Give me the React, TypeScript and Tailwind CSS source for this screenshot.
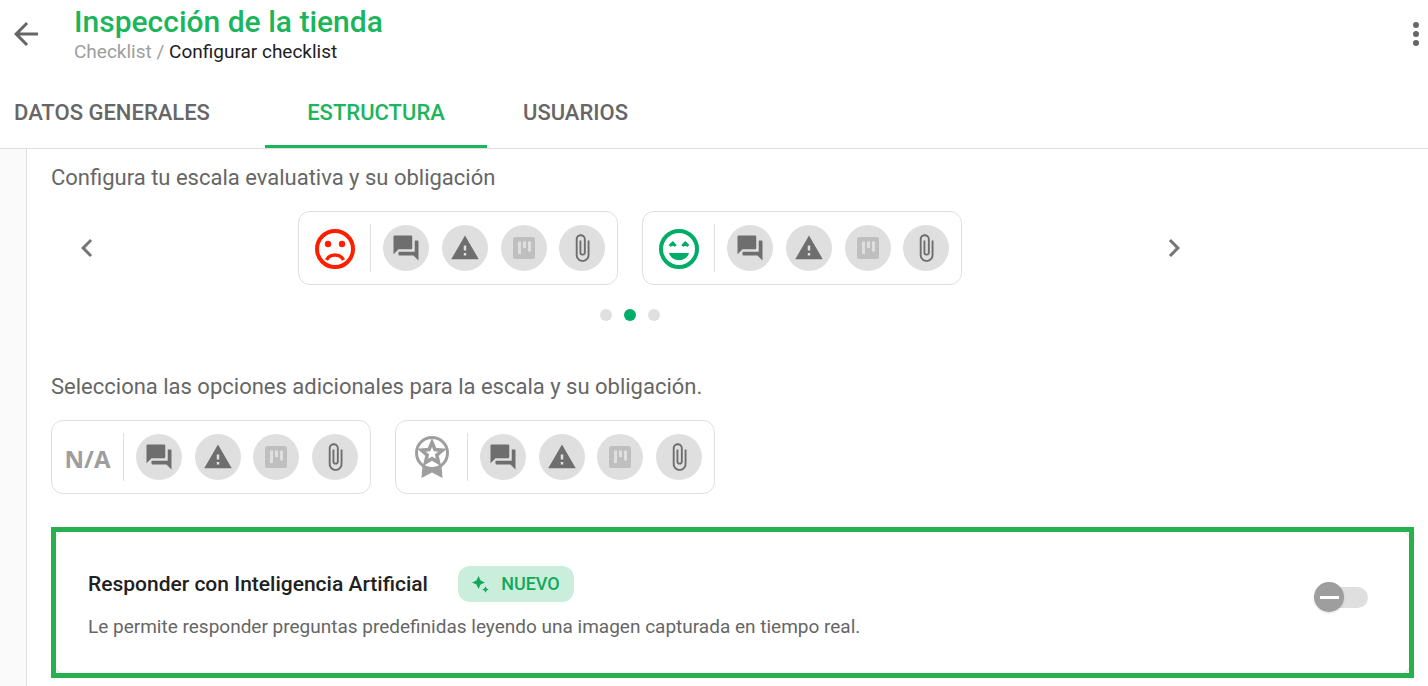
import type { ReactNode } from "react";
import {
  MdArrowBack,
  MdAttachFile,
  MdChevronLeft,
  MdChevronRight,
  MdForum,
  MdWarning,
} from "react-icons/md";

const tabs = [
  { label: "DATOS GENERALES", active: false, width: "w-[265px] pl-[14px] text-left" },
  { label: "ESTRUCTURA", active: true, width: "w-[222px] text-center" },
  { label: "USUARIOS", active: false, width: "w-[188px] pl-9 text-left" },
];

function BoardIcon() {
  return (
    <svg viewBox="0 0 24 24" className="size-6" fill="none" aria-hidden="true">
      <rect x="1" y="1" width="22" height="22" rx="2.5" fill="#bfbfbf" />
      <path d="M6 5.5h3v12.5H6zM11 5.5h3v6.500h-3zM16 5.500h3v10h-3z" fill="#dfdfdf" />
    </svg>
  );
}

function SadFace() {
  return (
    <svg viewBox="0 0 40 40" className="mt-0.5 size-10" fill="none" aria-hidden="true">
      <circle cx="20" cy="20" r="18" stroke="#ff1f00" strokeWidth="4" />
      <circle cx="13" cy="15" r="3.2" fill="#ff1f00" />
      <circle cx="27" cy="15" r="3.2" fill="#ff1f00" />
      <path d="M11.500 31c1.500-3.200 4.700-5 8.500-5s7 1.800 8.500 5" stroke="#ff1f00" strokeWidth="3.4" />
    </svg>
  );
}

function HappyFace() {
  return (
    <svg viewBox="0 0 40 40" className="mt-0.5 size-10" fill="none" aria-hidden="true">
      <circle cx="20" cy="20" r="18" stroke="#00ad68" strokeWidth="4" />
      <path d="M10.700 17l3-3 3 3M23.300 17l3-3 3 3" stroke="#00ad68" strokeWidth="3" />
      <path d="M10 24h20c-1.300 4.500-5.200 7.200-10 7.200S11.300 28.500 10 24z" fill="#00ad68" />
    </svg>
  );
}

function MedalIcon() {
  return (
    <svg viewBox="0 0 34 42" className="h-[42px] w-[34px]" fill="none" aria-hidden="true">
      <circle cx="17" cy="17" r="15.500" stroke="#9e9e9e" strokeWidth="3" />
      <path
        d="M17 6.500l3 7 7.500.700-5.700 5 1.700 7.300-6.500-3.900-6.500 3.900 1.700-7.300-5.700-5 7.500-.7z"
        stroke="#9e9e9e"
        strokeWidth="3.600"
      />
      <path d="M7.500 29.500c5.500 3.500 13.500 3.500 19 0l1 12.500L17 36.500 6.500 42z" fill="#9e9e9e" />
    </svg>
  );
}

function SparkleIcon() {
  return (
    <svg viewBox="0 0 17 17" className="size-[17px]" fill="#12a95b" aria-hidden="true">
      <path d="M6.500 0l2.100 4.400L13 6.500 8.600 8.600 6.500 13 4.400 8.600 0 6.500l4.400-2.100z" />
      <path d="M13.500 10.200l1.100 2.200 2.200 1.100-2.200 1.100-1.100 2.200-1.100-2.200-2.200-1.100 2.200-1.100z" />
    </svg>
  );
}

const actions = [
  { label: "Comentario", icon: <MdForum className="size-[30px]" /> },
  { label: "Alerta", icon: <MdWarning className="size-[30px]" /> },
  { label: "Plan de acción", icon: <BoardIcon /> },
  { label: "Adjunto", icon: <MdAttachFile className="size-[30px]" /> },
];

function ScaleCard({ children }: { children: ReactNode }) {
  return (
    <div className="flex h-[74px] w-80 items-center rounded-xl border border-[#dfdfdf] pr-3">
      <div className="flex w-[71px] shrink-0 justify-center">{children}</div>
      <div className="h-12 w-px bg-[#dfdfdf]" />
      <div className="ml-3 flex flex-1 justify-between">
        {actions.map((action) => (
          <button
            key={action.label}
            type="button"
            aria-label={action.label}
            className="flex size-[46px] items-center justify-center rounded-full bg-[#dfdfdf] text-[#6e6e6e]"
          >
            {action.icon}
          </button>
        ))}
      </div>
    </div>
  );
}

function Header() {
  return (
    <header className="border-b border-[#dfdfdf]">
      <div className="flex h-[76px] items-start justify-between">
        <div className="flex items-start">
          <button type="button" aria-label="Volver" className="mt-4 ml-2 text-[#666]">
            <MdArrowBack className="size-9" />
          </button>
          <div className="ml-[30px] pt-1">
            <h1 className="text-[30px] leading-9 font-medium text-[#1bb55c]">Inspección de la tienda</h1>
            <nav aria-label="Ruta" className="text-[19px] leading-6">
              <a href="#checklist" className="text-[#9e9e9e]">Checklist</a>
              <span className="text-[#9e9e9e]"> / </span>
              <span className="text-[#212121]">Configurar checklist</span>
            </nav>
          </div>
        </div>
        <button type="button" aria-label="Más opciones" className="mt-4 text-[#666]">
          <svg viewBox="4 0 16 24" className="h-9 w-6" fill="currentColor" aria-hidden="true">
            <circle cx="12" cy="6" r="2" />
            <circle cx="12" cy="12" r="2" />
            <circle cx="12" cy="18" r="2" />
          </svg>
        </button>
      </div>
      <div role="tablist" className="flex">
        {tabs.map((tab) => (
          <button
            key={tab.label}
            type="button"
            role="tab"
            aria-selected={tab.active}
            className={`h-[72px] border-b-3 pt-1 text-[22px] font-medium whitespace-nowrap ${tab.width} ${
              tab.active ? "border-[#1bb55c] text-[#1bb55c]" : "border-transparent text-[#666]"
            }`}
          >
            {tab.label}
          </button>
        ))}
      </div>
    </header>
  );
}

function ScaleCarousel() {
  return (
    <div className="w-[85%]">
      <div className="flex items-center justify-between">
        <button type="button" aria-label="Anterior" className="flex w-[72px] justify-center text-[#757575]">
          <MdChevronLeft className="size-9" />
        </button>
        <div className="flex gap-6">
          <ScaleCard>
            <SadFace />
          </ScaleCard>
          <ScaleCard>
            <HappyFace />
          </ScaleCard>
        </div>
        <button type="button" aria-label="Siguiente" className="flex w-[72px] justify-center text-[#757575]">
          <MdChevronRight className="size-9" />
        </button>
      </div>
      <div className="mt-6 flex justify-center gap-3">
        {[0, 1, 2].map((page) => (
          <button
            key={page}
            type="button"
            aria-label={`Página ${page + 1}`}
            className={`size-3 rounded-full ${page === 1 ? "bg-[#00ad68]" : "bg-[#dfdfdf]"}`}
          />
        ))}
      </div>
    </div>
  );
}

function AiPanel() {
  return (
    <section className="overflow-hidden border-5 border-[#27b04e]">
      <div className="-m-0.5 flex items-start justify-between rounded-xl border border-[#dfdfdf] py-[35px] pr-[42px] pl-[33px]">
        <div>
          <div className="flex items-center gap-[30px]">
            <h2 className="text-[21px] leading-9 font-medium text-[#212121]">
              Responder con Inteligencia Artificial
            </h2>
            <span className="flex h-9 w-[116px] items-center justify-center gap-3 rounded-xl bg-[#c9eedb] text-lg font-medium text-[#12a95b]">
              <SparkleIcon />
              NUEVO
            </span>
          </div>
          <p id="ai-description" className="mt-[13px] text-[19px] leading-6 text-[#666]">
            Le permite responder preguntas predefinidas leyendo una imagen capturada en tiempo real.
          </p>
        </div>
        <label className="relative mt-4 flex h-[30px] w-[54px] items-center">
          <input
            type="checkbox"
            role="switch"
            aria-label="Responder con Inteligencia Artificial"
            aria-describedby="ai-description"
            className="ml-1 h-[21px] flex-1 appearance-none rounded-full bg-[#dfdfdf]"
          />
          <span className="pointer-events-none absolute left-0 flex size-[30px] items-center justify-center rounded-full bg-[#9e9e9e] shadow">
            <span className="h-[3px] w-[19px] bg-white" />
          </span>
        </label>
      </div>
    </section>
  );
}

export default function App() {
  return (
    <div className="flex min-h-screen flex-col bg-white font-[Roboto,sans-serif]">
      <Header />
      <div className="flex flex-1">
        <aside className="w-[27px] shrink-0 border-r border-[#dfdfdf] bg-[#fafafa]" />
        <main className="min-w-0 flex-1 pt-[14px] pr-[14px] pb-2 pl-6 text-[#666]">
          <p className="mb-[18px] text-[22px] leading-[30px]">Configura tu escala evaluativa y su obligación</p>
          <ScaleCarousel />
          <p className="mt-[51px] mb-[18px] text-[22px] leading-[30px]">
            Selecciona las opciones adicionales para la escala y su obligación.
          </p>
          <div className="mb-[33px] flex gap-6">
            <ScaleCard>
              <span className="pt-1 font-['Open_Sans',sans-serif] text-2xl font-bold text-[#9e9e9e]">N/A</span>
            </ScaleCard>
            <ScaleCard>
              <MedalIcon />
            </ScaleCard>
          </div>
          <AiPanel />
        </main>
      </div>
    </div>
  );
}
